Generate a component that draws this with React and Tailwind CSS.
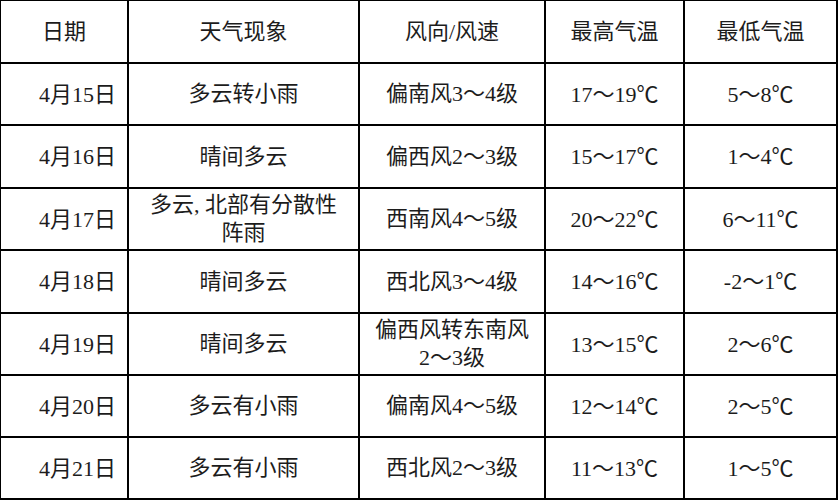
import React from 'react';

const headers = ['日期', '天气现象', '风向/风速', '最高气温', '最低气温'];

const rows = [
  ['4月15日', ['多云转小雨'], ['偏南风3～4级'], '17～19℃', '5～8℃'],
  ['4月16日', ['晴间多云'], ['偏西风2～3级'], '15～17℃', '1～4℃'],
  ['4月17日', ['多云, 北部有分散性', '阵雨'], ['西南风4～5级'], '20～22℃', '6～11℃'],
  ['4月18日', ['晴间多云'], ['西北风3～4级'], '14～16℃', '-2～1℃'],
  ['4月19日', ['晴间多云'], ['偏西风转东南风', '2～3级'], '13～15℃', '2～6℃'],
  ['4月20日', ['多云有小雨'], ['偏南风4～5级'], '12～14℃', '2～5℃'],
  ['4月21日', ['多云有小雨'], ['西北风2～3级'], '11～13℃', '1～5℃'],
];

function Lines({ lines }) {
  return (
    <div className="flex flex-col items-center leading-[28px]">
      {lines.map((l, i) => (
        <span key={i}>{l}</span>
      ))}
    </div>
  );
}

export default function App() {
  return (
    <div className="w-[839px] h-[500px] bg-white text-[#1c1c1c] text-[22px] font-normal font-['Liberation_Serif','Noto_Sans_CJK_SC',serif]">
      <div className="w-[838px] h-[500px] bg-black pt-px pl-px pr-[2px] pb-[2px] grid grid-cols-[126px_229px_184px_137px_151px] grid-rows-[61px_60px_61px_60px_61px_60px_60px_60px] gap-[2px]">
        {headers.map((h) => (
          <div key={h} className="bg-white flex items-center justify-center">
            {h}
          </div>
        ))}
        {rows.map((r) => (
          <React.Fragment key={r[0]}>
            <div className="bg-white flex items-center justify-end pr-[11px]">{r[0]}</div>
            <div className="bg-white flex items-center justify-center">
              <Lines lines={r[1]} />
            </div>
            <div className="bg-white flex items-center justify-center">
              <Lines lines={r[2]} />
            </div>
            <div className="bg-white flex items-center justify-center">{r[3]}</div>
            <div className="bg-white flex items-center justify-center">{r[4]}</div>
          </React.Fragment>
        ))}
      </div>
    </div>
  );
}
